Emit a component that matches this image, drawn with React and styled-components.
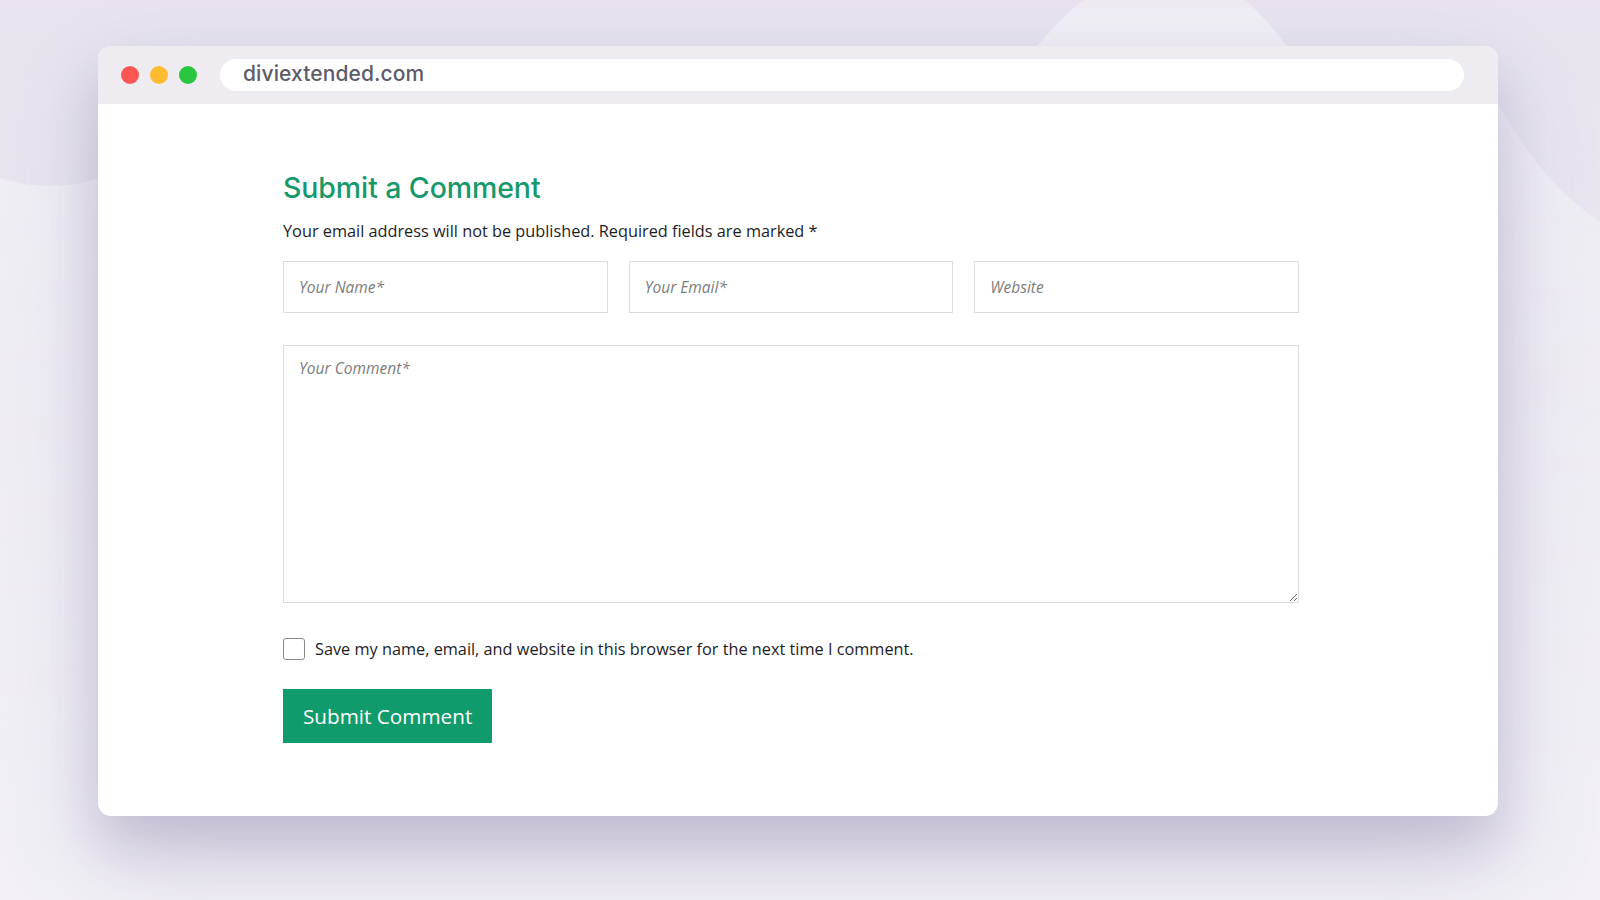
import React from "react";
import styled, { createGlobalStyle } from "styled-components";

const Global = createGlobalStyle`
  html, body { margin: 0; padding: 0; }
  body { width: 1600px; height: 900px; overflow: hidden; font-family: "Open Sans", "Noto Sans", sans-serif; }
  * { box-sizing: border-box; }
`;

const Page = styled.div`
  position: relative;
  width: 1600px;
  height: 900px;
  padding: 46px 0 0 98px;
  background: linear-gradient(180deg, #e7e4ef 0%, #ebe8f1 45%, #f3f1f7 100%);
  overflow: hidden;
`;

const Backdrop = styled.svg`
  position: absolute;
  left: 0;
  top: 0;
  width: 1600px;
  height: 900px;
  z-index: 0;
`;

const Window = styled.div`
  position: relative;
  z-index: 1;
  width: 1400px;
  height: 770px;
  border-radius: 13px;
  background: #fff;
  overflow: hidden;
  display: flex;
  flex-direction: column;
  box-shadow: 0 28px 50px rgba(90, 72, 130, 0.2), 0 50px 110px rgba(90, 72, 130, 0.16);
`;

const TitleBar = styled.div`
  height: 58px;
  flex: none;
  background: #eeebf1;
  display: flex;
  align-items: center;
  padding: 0 34px 0 23px;
`;

const Dots = styled.div`
  display: flex;
  gap: 11px;
  margin-right: 23px;
`;

const Dot = styled.span`
  width: 18px;
  height: 18px;
  border-radius: 50%;
  background: ${(p) => p.$color};
`;

const UrlBar = styled.div`
  flex: 1;
  height: 32px;
  border-radius: 16px;
  background: #fff;
  display: flex;
  align-items: center;
  padding: 0 0 3px 23px;
  font-family: "Inter", sans-serif;
  font-weight: 500;
  font-size: 21px;
  color: #5d5a69;
  letter-spacing: 0.1px;
`;

const Content = styled.div`
  flex: 1;
  padding: 67px 199px 0 185px;
  display: flex;
  flex-direction: column;
`;

const Heading = styled.h2`
  margin: 0;
  font-family: "Inter", sans-serif;
  font-weight: 500;
  font-size: 28.5px;
  line-height: 34px;
  color: #17996b;
  letter-spacing: -0.1px;
`;

const Note = styled.p`
  margin: 14px 0 0;
  font-size: 16.3px;
  line-height: 24px;
  color: #1d1d1f;
`;

const FieldRow = styled.div`
  margin-top: 18px;
  display: grid;
  grid-template-columns: repeat(3, 1fr);
  gap: 21px;
`;

const fieldStyles = `
  border: 1px solid #dcdcdc;
  background: #fff;
  font-family: "Open Sans", sans-serif;
  font-size: 15.5px;
  color: #333;
  outline: none;
  &::placeholder { color: #7d7d7d; font-style: italic; }
`;

const Input = styled.input`
  ${fieldStyles}
  height: 52px;
  width: 100%;
  padding: 0 15px;
`;

const TextArea = styled.textarea`
  ${fieldStyles}
  margin-top: 32px;
  height: 258px;
  width: 100%;
  padding: 11px 15px;
  line-height: 22px;
  resize: vertical;
`;

const CheckRow = styled.label`
  margin-top: 35px;
  display: flex;
  align-items: center;
  gap: 10px;
  font-size: 16.3px;
  line-height: 22px;
  color: #1d1d1f;
`;

const Check = styled.input`
  appearance: none;
  margin: 0;
  width: 22px;
  height: 22px;
  border: 1px solid #8a8a8a;
  border-radius: 3px;
  background: #fff;
`;

const Submit = styled.button`
  margin-top: 29px;
  align-self: flex-start;
  height: 54px;
  padding: 0 20px;
  border: none;
  border-radius: 0;
  background: #0f9b6b;
  color: #fff;
  font-family: "Open Sans", sans-serif;
  font-weight: 500;
  font-size: 20.7px;
  cursor: pointer;
`;

export default function App() {
  return (
    <>
      <Global />
      <Page>
        <Backdrop viewBox="0 0 1600 900" aria-hidden="true">
          <defs>
            <linearGradient id="fadeDown" x1="0" y1="0" x2="0" y2="1">
              <stop offset="0" stopColor="#fff" stopOpacity="0.36" />
              <stop offset="0.75" stopColor="#fff" stopOpacity="0.12" />
              <stop offset="1" stopColor="#fff" stopOpacity="0" />
            </linearGradient>
          </defs>
          <path d="M1010,80 C1040,40 1070,8 1085,0 L1245,0 C1260,12 1285,40 1310,80 Z" fill="rgba(255,255,255,0.38)" />
          <path d="M0,178 C30,188 70,190 104,176 L104,880 L0,880 Z" fill="url(#fadeDown)" />
          <path d="M1470,60 C1505,110 1530,175 1600,222 L1600,880 L1470,880 Z" fill="url(#fadeDown)" />
          <path d="M0,0 L1600,0 L1600,8 L0,8 Z" fill="rgba(240,225,240,0.35)" />
        </Backdrop>
        <Window>
          <TitleBar>
            <Dots>
              <Dot $color="#fd5652" />
              <Dot $color="#fdbb2f" />
              <Dot $color="#29c63f" />
            </Dots>
            <UrlBar>diviextended.com</UrlBar>
          </TitleBar>
          <Content>
            <Heading>Submit a Comment</Heading>
            <Note>Your email address will not be published. Required fields are marked *</Note>
            <FieldRow>
              <Input placeholder="Your Name*" />
              <Input placeholder="Your Email*" />
              <Input placeholder="Website" />
            </FieldRow>
            <TextArea placeholder="Your Comment*" />
            <CheckRow>
              <Check type="checkbox" />
              Save my name, email, and website in this browser for the next time I comment.
            </CheckRow>
            <Submit type="button">Submit Comment</Submit>
          </Content>
        </Window>
      </Page>
    </>
  );
}
